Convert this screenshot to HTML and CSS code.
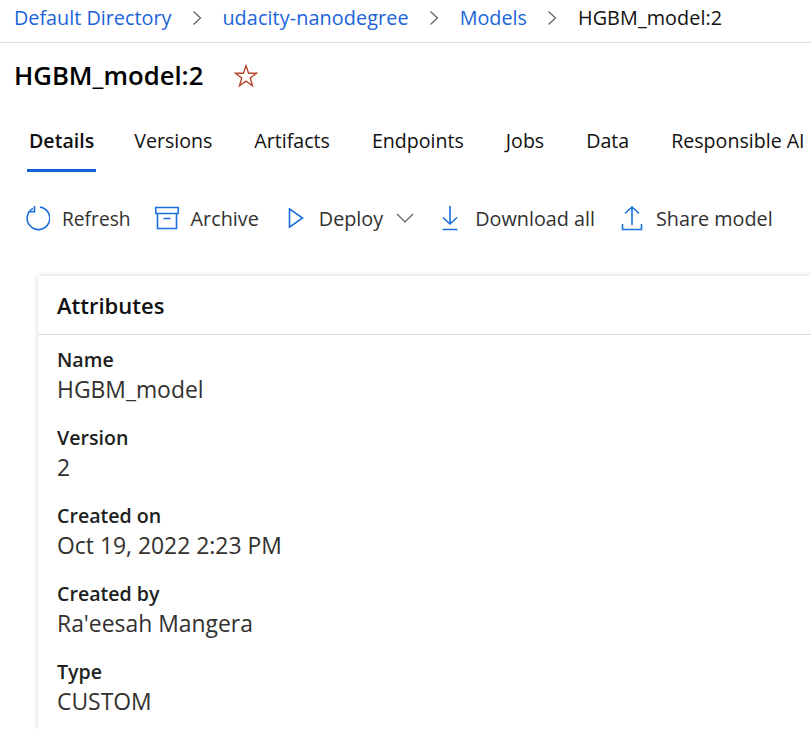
FILE: index.html
```html
<!DOCTYPE html>
<html lang="en">
<head>
    <meta charset="UTF-8">
    <meta name="viewport" content="width=device-width, initial-scale=1.0">
    <title>HGBM_model:2</title>
    <link rel="stylesheet" href="styles.css">
</head>
<body>
    <nav class="breadcrumb">
        <a href="#">Default Directory</a>
        <svg class="chevron" viewBox="0 0 10 16"><path d="M1.5 1.5 8.5 8l-7 6.5"/></svg>
        <a class="crumb-long" href="#">udacity-nanodegree</a>
        <svg class="chevron" viewBox="0 0 10 16"><path d="M1.5 1.5 8.5 8l-7 6.5"/></svg>
        <a href="#">Models</a>
        <svg class="chevron" viewBox="0 0 10 16"><path d="M1.5 1.5 8.5 8l-7 6.5"/></svg>
        <span class="current">HGBM_model:2</span>
    </nav>

    <header class="title-row">
        <h1>HGBM_model:2</h1>
        <svg class="star" viewBox="0 0 24 24"><path d="M12 1.8 14.6 9.2H22.6L16.2 14 18.5 21.8 12 17.2 5.500 21.8 7.800 14 1.400 9.200H9.400Z"/></svg>
    </header>

    <div class="tabs">
        <span class="tab active">Details</span>
        <span class="tab">Versions</span>
        <span class="tab">Artifacts</span>
        <span class="tab">Endpoints</span>
        <span class="tab">Jobs</span>
        <span class="tab">Data</span>
        <span class="tab">Responsible AI</span>
    </div>

    <div class="toolbar">
        <button class="tool tool-refresh">
            <svg class="icon" width="26" height="26" viewBox="0 0 26 26"><path d="M9 3.400A11.300 11.300 0 1 0 16 2.100"/><path d="M10.500 1V6.800H4.500"/></svg>
            Refresh
        </button>
        <button class="tool tool-archive">
            <svg class="icon" width="24" height="24" viewBox="0 0 24 24"><path d="M.7 1.500H23.300V7.500H.7ZM2.500 7.500V22.500H21.500V7.500M8.500 12.500H15.500"/></svg>
            Archive
        </button>
        <button class="tool tool-deploy">
            <svg class="icon" width="16" height="20" viewBox="0 0 16 20"><path d="M1.500 .8 14.500 10 1.500 19.200Z"/></svg>
            Deploy
            <svg class="caret" viewBox="0 0 18 10"><path d="M1 1 9 9l8-8"/></svg>
        </button>
        <button class="tool tool-download">
            <svg class="icon" width="18" height="26" viewBox="0 0 18 26"><path d="M9 1V19M2 12.500 9 19l7-6.500M1.500 24.500H16.500"/></svg>
            Download all
        </button>
        <button class="tool tool-share">
            <svg class="icon" width="22" height="26" viewBox="0 0 22 26"><path d="M11 2V20M4 8.500 11 2l7 6.500M1.500 19V24.500H20.500V19"/></svg>
            Share model
        </button>
    </div>

    <section class="card">
        <h2>Attributes</h2>
        <dl class="attrs">
            <div class="attr"><dt>Name</dt><dd>HGBM_model</dd></div>
            <div class="attr"><dt>Version</dt><dd>2</dd></div>
            <div class="attr"><dt>Created on</dt><dd>Oct 19, 2022 2:23 PM</dd></div>
            <div class="attr"><dt>Created by</dt><dd>Ra'eesah Mangera</dd></div>
            <div class="attr"><dt>Type</dt><dd>CUSTOM</dd></div>
        </dl>
    </section>
</body>
</html>
```

FILE: styles.css
```css
html, body {
    margin: 0;
    height: 729px;
    overflow: hidden;
    background: #fff;
}
body {
    font-family: "Open Sans", "Noto Sans", sans-serif;
    color: #201f1e;
}
.breadcrumb {
    display: flex;
    align-items: center;
    box-sizing: border-box;
    height: 43px;
    padding: 0 0 7px 14px;
    border-bottom: 1px solid #dcdcdc;
    font-size: 19.8px;
    white-space: nowrap;
}
.breadcrumb a {
    color: #1a63d8;
    text-decoration: none;
}
.breadcrumb .crumb-long {
    letter-spacing: .1px;
}
.current {
    color: #111;
    letter-spacing: .1px;
}
.chevron {
    width: 10px;
    height: 16px;
    margin: 0 20.5px;
    fill: none;
    stroke: #605e5c;
    stroke-width: 1.2;
}
.title-row {
    display: flex;
    align-items: center;
    height: 66px;
    padding-left: 14px;
}
h1 {
    margin: 0 0 2px;
    font-size: 25.7px;
    font-weight: 600;
    color: #000;
}
.star {
    width: 24px;
    height: 24px;
    margin-left: 31px;
    fill: none;
    stroke: #b8452c;
    stroke-width: 1.4;
}
.tabs {
    display: flex;
    gap: 42px;
    height: 64px;
    padding-left: 29px;
    box-sizing: border-box;
    white-space: nowrap;
    font-size: 19.6px;
    color: #111;
}
.tab {
    padding-top: 18px;
}
.tab.active {
    font-weight: 600;
    border-bottom: 3px solid #0f62d6;
    height: 42px;
    margin: 0 -4px 0 -2px;
    padding: 18px 2px 0;
}
.toolbar {
    display: flex;
    align-items: center;
    height: 90px;
    padding-left: 24px;
}
.tool {
    display: flex;
    align-items: center;
    gap: 12px;
    padding: 0;
    border: 0;
    background: none;
    font: inherit;
    font-size: 19.8px;
    color: #323130;
    white-space: nowrap;
}
.tool-refresh {
    font-size: 19.2px;
}
.tool-archive {
    margin-left: 24px;
}
.tool-deploy {
    margin-left: 29px;
    gap: 15px;
}
.tool-download {
    margin-left: 27px;
    gap: 16px;
}
.tool-share {
    margin-left: 26px;
    gap: 13px;
}
.icon {
    fill: none;
    stroke: #1a6fe0;
    stroke-width: 1.6;
}
.caret {
    width: 18px;
    height: 10px;
    margin-left: -2px;
    fill: none;
    stroke: #605e5c;
    stroke-width: 1.2;
}
.card {
    margin: 13px 0 0 38px;
    box-shadow: 0 0 5px rgba(0, 0, 0, .18);
    height: 454px;
}
h2 {
    margin: 0;
    height: 59px;
    box-sizing: border-box;
    padding: 14px 0 0 19px;
    font-size: 22px;
    font-weight: 600;
    color: #111;
    border-bottom: 1px solid #d9d9d9;
}
.attrs {
    margin: 0;
    padding: 10px 0 0 19px;
}
.attr {
    height: 78px;
}
.attr:last-child {
    height: 60px;
}
dt {
    font-size: 19.6px;
    font-weight: 600;
    color: #201f1e;
    line-height: 30px;
}
dd {
    margin: 0;
    font-size: 22.9px;
    line-height: 30px;
    color: #323130;
}
```
